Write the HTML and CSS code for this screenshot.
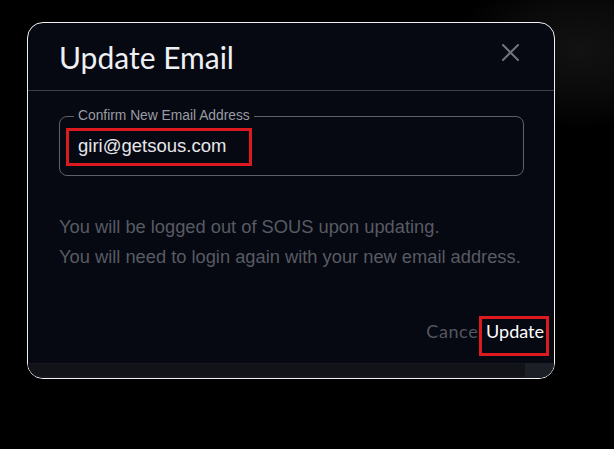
FILE: index.html
```html
<!DOCTYPE html>
<html lang="en">
<head>
<meta charset="utf-8">
<title>Update Email</title>
<link rel="stylesheet" href="styles.css">
</head>
<body>
<div class="backdrop">
  <div class="dialog">
    <div class="header">
      <h1 class="title">Update Email</h1>
      <button class="close" aria-label="Close">
        <svg width="17" height="17" viewBox="0 0 17 17"><path d="M1 1 L16 16 M16 1 L1 16" stroke="#70737a" stroke-width="2" stroke-linecap="square" fill="none"/></svg>
      </button>
    </div>
    <div class="content">
      <div class="field">
        <span class="label">Confirm New Email Address</span>
        <span class="value">giri@getsous.com</span>
        <span class="mark mark-value"></span>
      </div>
      <p class="note">You will be logged out of SOUS upon updating.<br>You will need to login again with your new email address.</p>
    </div>
    <div class="actions">
      <span class="btn cancel">Cancel</span>
      <span class="btn update">Update<span class="mark mark-update"></span></span>
    </div>
    <div class="spacer"></div>
    <div class="scrollbar">
      <div class="thumb"></div>
      <div class="track"></div>
    </div>
  </div>
</div>
</body>
</html>
```

FILE: styles.css
```css
* { box-sizing: border-box; }
html, body { margin: 0; height: 449px; overflow: hidden; }
body {
  background: radial-gradient(ellipse 130px 80px at 580px 50px, #121212 0%, #0a0a0a 55%, #000 100%), #000;
  font-family: "Liberation Sans", Arial, sans-serif;
}
.backdrop { padding: 22px 0 0 27px; }
.dialog {
  width: 528px;
  height: 357px;
  border: 1px solid #f2f2f2;
  border-radius: 16px;
  background: #060812;
  overflow: hidden;
  display: flex;
  flex-direction: column;
}
.header {
  height: 68px;
  border-bottom: 1px solid #3b3e47;
  display: flex;
  align-items: flex-start;
  justify-content: space-between;
  padding: 17px 35px 0 31px;
}
.title {
  margin: 0;
  font-family: "Lato", sans-serif;
  font-weight: 400;
  font-size: 30px;
  line-height: 34px;
  color: #eef0f4;
}
.close {
  margin-top: 4px;
  padding: 0;
  border: 0;
  background: none;
  width: 17px;
  height: 17px;
  display: flex;
}
.content { padding: 25px 30px 0 31px; }
.field {
  position: relative;
  width: 465px;
  height: 60px;
  border: 1px solid #5e616a;
  border-radius: 8px;
  display: flex;
  align-items: center;
  padding-left: 18px;
}
.label {
  position: absolute;
  left: 14px;
  top: -9px;
  padding: 0 4px;
  background: #060812;
  font-size: 13.8px;
  line-height: 16px;
  color: #9a9ca3;
}
.value {
  font-size: 18.5px;
  line-height: 22px;
  color: #e6e7ea;
}
.mark {
  position: absolute;
  border: 3px solid #dc1a20;
}
.mark-value { left: 6px; top: 11px; width: 186px; height: 38px; }
.note {
  margin: 36px 0 0;
  font-size: 18.3px;
  line-height: 30px;
  color: #585b62;
}
.actions {
  margin-top: 48px;
  display: flex;
  justify-content: flex-end;
  gap: 3px;
  padding-right: 10px;
}
.btn {
  font-family: "Lato", sans-serif;
  font-size: 18px;
  line-height: 22px;
}
.cancel { color: #54575e; letter-spacing: 0.6px; }
.update { color: #ffffff; position: relative; }
.mark-update { left: -7px; top: -4px; width: 70px; height: 40px; }
.spacer { flex: 1; }
.scrollbar {
  height: 15px;
  display: flex;
  background: #18191e;
}
.thumb {
  width: 497px;
  height: 12px;
  margin-top: 1px;
  background: #121318;
}
.track { flex: 1; background: #1d1f26; }
```
